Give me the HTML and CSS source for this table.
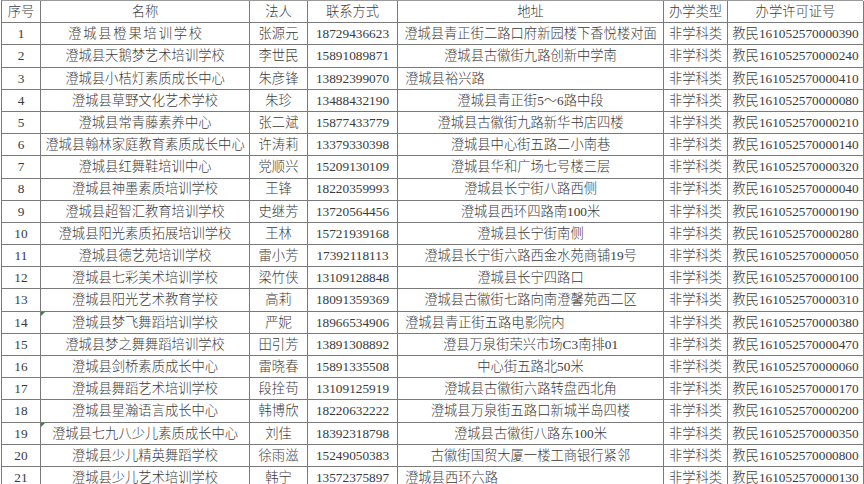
FILE: index.html
```html
<!DOCTYPE html>
<html lang="zh-CN">
<head>
<meta charset="utf-8">
<title>澄城县非学科类培训机构</title>
<link rel="stylesheet" href="styles.css">
</head>
<body>
<div class="sheet">
  <div class="cell hd">序号</div><div class="cell hd">名称</div><div class="cell hd">法人</div><div class="cell hd">联系方式</div><div class="cell hd">地址</div><div class="cell hd">办学类型</div><div class="cell hd">办学许可证号</div>

  <div class="cell">1</div><div class="cell wide">澄城县橙果培训学校</div><div class="cell">张源元</div><div class="cell">18729436623</div><div class="cell">澄城县青正街二路口府新园楼下香悦楼对面</div><div class="cell">非学科类</div><div class="cell">教民161052570000390</div>
  <div class="cell">2</div><div class="cell">澄城县天鹅梦艺术培训学校</div><div class="cell">李世民</div><div class="cell">15891089871</div><div class="cell">澄城县古徽街九路创新中学南</div><div class="cell">非学科类</div><div class="cell">教民161052570000240</div>
  <div class="cell">3</div><div class="cell">澄城县小桔灯素质成长中心</div><div class="cell">朱彦锋</div><div class="cell">13892399070</div><div class="cell left">澄城县裕兴路</div><div class="cell">非学科类</div><div class="cell">教民161052570000410</div>
  <div class="cell">4</div><div class="cell">澄城县草野文化艺术学校</div><div class="cell">朱珍</div><div class="cell">13488432190</div><div class="cell">澄城县青正街5～6路中段</div><div class="cell">非学科类</div><div class="cell">教民161052570000080</div>
  <div class="cell">5</div><div class="cell">澄城县常青藤素养中心</div><div class="cell">张二斌</div><div class="cell">15877433779</div><div class="cell">澄城县古徽街九路新华书店四楼</div><div class="cell">非学科类</div><div class="cell">教民161052570000210</div>
  <div class="cell">6</div><div class="cell">澄城县翰林家庭教育素质成长中心</div><div class="cell">许涛莉</div><div class="cell">13379330398</div><div class="cell">澄城县中心街五路二小南巷</div><div class="cell">非学科类</div><div class="cell">教民161052570000140</div>
  <div class="cell">7</div><div class="cell">澄城县红舞鞋培训中心</div><div class="cell">党顺兴</div><div class="cell">15209130109</div><div class="cell">澄城县华和广场七号楼三层</div><div class="cell">非学科类</div><div class="cell">教民161052570000320</div>
  <div class="cell">8</div><div class="cell">澄城县神墨素质培训学校</div><div class="cell">王锋</div><div class="cell">18220359993</div><div class="cell">澄城县长宁街八路西侧</div><div class="cell">非学科类</div><div class="cell">教民161052570000040</div>
  <div class="cell">9</div><div class="cell">澄城县超智汇教育培训学校</div><div class="cell">史继芳</div><div class="cell">13720564456</div><div class="cell">澄城县西环四路南100米</div><div class="cell">非学科类</div><div class="cell">教民161052570000190</div>
  <div class="cell">10</div><div class="cell">澄城县阳光素质拓展培训学校</div><div class="cell">王林</div><div class="cell">15721939168</div><div class="cell">澄城县长宁街南侧</div><div class="cell">非学科类</div><div class="cell">教民161052570000280</div>
  <div class="cell">11</div><div class="cell">澄城县德艺苑培训学校</div><div class="cell">雷小芳</div><div class="cell">17392118113</div><div class="cell">澄城县长宁街六路西金水苑商铺19号</div><div class="cell">非学科类</div><div class="cell">教民161052570000050</div>
  <div class="cell">12</div><div class="cell">澄城县七彩美术培训学校</div><div class="cell">梁竹侠</div><div class="cell">13109128848</div><div class="cell">澄城县长宁四路口</div><div class="cell">非学科类</div><div class="cell">教民161052570000100</div>
  <div class="cell">13</div><div class="cell">澄城县阳光艺术教育学校</div><div class="cell">高莉</div><div class="cell">18091359369</div><div class="cell">澄城县古徽街七路向南澄馨苑西二区</div><div class="cell">非学科类</div><div class="cell">教民161052570000310</div>
  <div class="cell">14</div><div class="cell flag">澄城县梦飞舞蹈培训学校</div><div class="cell">严妮</div><div class="cell">18966534906</div><div class="cell left">澄城县青正街五路电影院内</div><div class="cell">非学科类</div><div class="cell">教民161052570000380</div>
  <div class="cell">15</div><div class="cell">澄城县梦之舞舞蹈培训学校</div><div class="cell">田引芳</div><div class="cell">13891308892</div><div class="cell">澄县万泉街荣兴市场C3南排01</div><div class="cell">非学科类</div><div class="cell">教民161052570000470</div>
  <div class="cell">16</div><div class="cell">澄城县剑桥素质成长中心</div><div class="cell">雷晓春</div><div class="cell">15891335508</div><div class="cell">中心街五路北50米</div><div class="cell">非学科类</div><div class="cell">教民161052570000060</div>
  <div class="cell">17</div><div class="cell">澄城县舞蹈艺术培训学校</div><div class="cell">段拴苟</div><div class="cell">13109125919</div><div class="cell">澄城县古徽街六路转盘西北角</div><div class="cell">非学科类</div><div class="cell">教民161052570000170</div>
  <div class="cell">18</div><div class="cell">澄城县星瀚语言成长中心</div><div class="cell">韩博欣</div><div class="cell">18220632222</div><div class="cell">澄城县万泉街五路口新城半岛四楼</div><div class="cell">非学科类</div><div class="cell">教民161052570000200</div>
  <div class="cell">19</div><div class="cell flag">澄城县七九八少儿素质成长中心</div><div class="cell">刘佳</div><div class="cell">18392318798</div><div class="cell">澄城县古徽街八路东100米</div><div class="cell">非学科类</div><div class="cell">教民161052570000350</div>
  <div class="cell">20</div><div class="cell">澄城县少儿精英舞蹈学校</div><div class="cell">徐雨滋</div><div class="cell">15249050383</div><div class="cell">古徽街国贸大厦一楼工商银行紧邻</div><div class="cell">非学科类</div><div class="cell">教民161052570000800</div>
  <div class="cell">21</div><div class="cell">澄城县少儿艺术培训学校</div><div class="cell">韩宁</div><div class="cell">13572375897</div><div class="cell left">澄城县西环六路</div><div class="cell">非学科类</div><div class="cell">教民161052570000130</div>
</div>
</body>
</html>
```
FILE: styles.css
```css
html, body {
  margin: 0;
  padding: 0;
  background: #ffffff;
}
body {
  font-family: "Liberation Serif", "Noto Sans CJK SC", serif;
  font-size: 13.3px;
  font-weight: 300;
  color: #3a3a3a;
}
.sheet {
  display: grid;
  grid-template-columns: 39px 209px 58px 90px 266px 64px 136px;
  grid-auto-rows: 22.2px;
  margin-left: 1px;
  width: 862px;
  border-left: 1px solid #7a7a7a;
  border-top: 1px solid #9a9a9a;
  box-sizing: border-box;
}
.cell {
  position: relative;
  display: flex;
  align-items: center;
  justify-content: center;
  white-space: nowrap;
  overflow: hidden;
  border-right: 1px solid #7a7a7a;
  border-bottom: 1px solid #7a7a7a;
  line-height: 1;
}
.cell.left {
  justify-content: flex-start;
  padding-left: 7px;
}
.cell.wide {
  letter-spacing: 1.8px;
  padding-right: 18px;
}
.cell.flag::before {
  content: "";
  position: absolute;
  left: 0;
  top: 0;
  border-top: 4px solid #2e8b3a;
  border-right: 4px solid transparent;
}
```
